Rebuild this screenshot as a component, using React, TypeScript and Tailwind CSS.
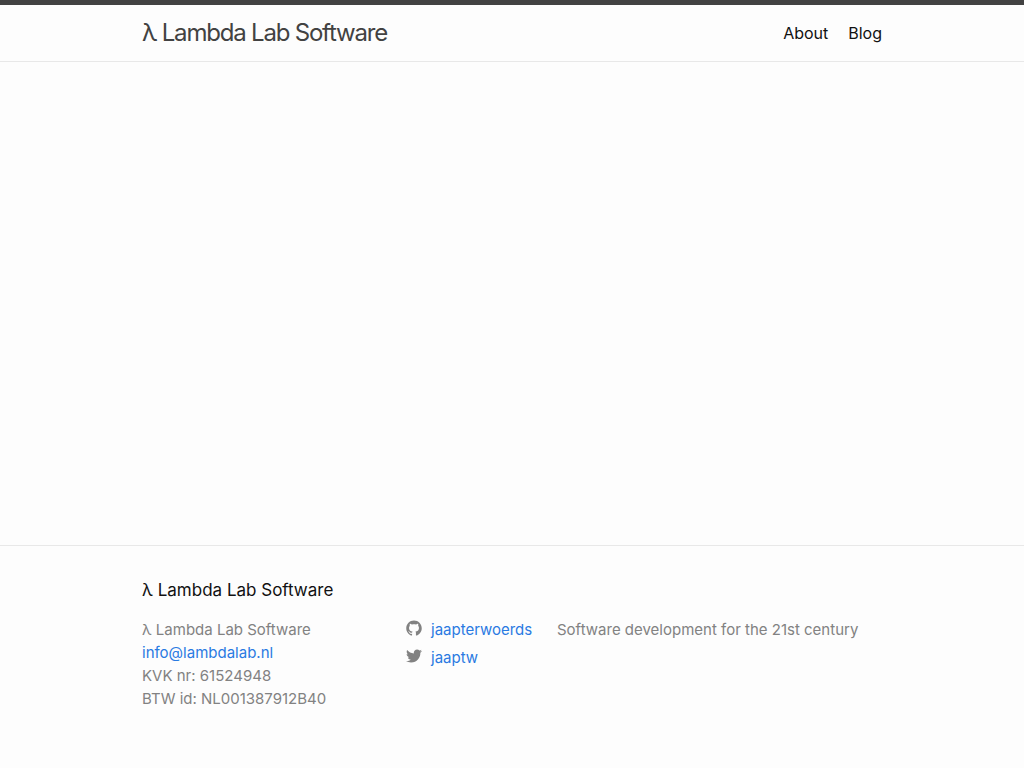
import React from 'react';

const navLinks = [
    { label: 'About', href: '/about/' },
    { label: 'Blog', href: '/blog/' },
];

const GithubIcon: React.FC = () => (
    <svg viewBox="0 0 16 16" className="w-4 h-5 fill-[#828282]" aria-hidden="true">
        <path d="M7.999,0.431c-4.285,0-7.76,3.474-7.76,7.761 c0,3.428,2.223,6.337,5.307,7.363c0.388,0.071,0.53-0.168,0.53-0.374c0-0.184-0.007-0.672-0.01-1.32 c-2.159,0.469-2.614-1.04-2.614-1.04c-0.353-0.896-0.862-1.135-0.862-1.135c-0.705-0.481,0.053-0.472,0.053-0.472 c0.779,0.055,1.189,0.8,1.189,0.8c0.692,1.186,1.816,0.843,2.258,0.645c0.071-0.502,0.271-0.843,0.493-1.037 C4.86,11.425,3.049,10.76,3.049,7.786c0-0.847,0.302-1.54,0.799-2.082C3.768,5.507,3.501,4.718,3.924,3.65 c0,0,0.652-0.209,2.134,0.796C6.677,4.273,7.34,4.187,8,4.184c0.659,0.003,1.323,0.089,1.943,0.261 c1.482-1.004,2.132-0.796,2.132-0.796c0.423,1.068,0.157,1.857,0.077,2.054c0.497,0.542,0.798,1.235,0.798,2.082 c0,2.981-1.814,3.637-3.543,3.829c0.279,0.24,0.527,0.713,0.527,1.437c0,1.037-0.01,1.874-0.01,2.129 c0,0.208,0.14,0.449,0.534,0.373c3.081-1.028,5.302-3.935,5.302-7.362C15.76,3.906,12.285,0.431,7.999,0.431z" />
    </svg>
);

const TwitterIcon: React.FC = () => (
    <svg viewBox="0 0 16 16" className="w-4 h-5 fill-[#828282]" aria-hidden="true">
        <path d="M15.969,3.058c-0.586,0.26-1.217,0.436-1.878,0.515c0.675-0.405,1.194-1.045,1.438-1.809c-0.632,0.375-1.332,0.647-2.076,0.793c-0.596-0.636-1.446-1.033-2.387-1.033c-1.806,0-3.27,1.464-3.27,3.27 c0,0.256,0.029,0.506,0.085,0.745C5.163,5.404,2.753,4.102,1.14,2.124C0.859,2.607,0.698,3.168,0.698,3.767 c0,1.134,0.577,2.135,1.455,2.722C1.616,6.472,1.112,6.325,0.671,6.08c0,0.014,0,0.027,0,0.041c0,1.584,1.127,2.906,2.623,3.206 C3.02,9.402,2.731,9.442,2.433,9.442c-0.211,0-0.416-0.021-0.615-0.059c0.416,1.299,1.624,2.245,3.055,2.271 c-1.119,0.877-2.529,1.4-4.061,1.4c-0.264,0-0.524-0.015-0.78-0.046c1.447,0.928,3.166,1.469,5.013,1.469 c6.015,0,9.304-4.983,9.304-9.304c0-0.142-0.003-0.283-0.009-0.423C14.976,4.29,15.531,3.714,15.969,3.058z" />
    </svg>
);

const socialLinks = [
    { name: 'jaapterwoerds', href: 'https://github.com/jaapterwoerds', Icon: GithubIcon },
    { name: 'jaaptw', href: 'https://twitter.com/jaaptw', Icon: TwitterIcon },
];

const Header: React.FC = () => (
    <header className="border-t-5 border-t-[#424242] border-b border-b-[#e8e8e8]">
        <div className="max-w-[800px] mx-auto px-[30px] flex items-center justify-between">
            <a href="/" className="text-2xl leading-14 tracking-tighter text-[#424242]">λ Lambda Lab Software</a>
            <nav className="flex gap-5 text-base leading-14 text-[#111]">
                {navLinks.map(l => (
                    <a key={l.href} href={l.href}>{l.label}</a>
                ))}
            </nav>
        </div>
    </header>
);

const Footer: React.FC = () => (
    <footer className="border-t border-[#e8e8e8] pt-[30px] pb-[58px]">
        <div className="max-w-[800px] mx-auto px-[30px]">
            <h2 className="text-[17px] leading-7 mb-[14px] text-[#111]">λ Lambda Lab Software</h2>
            <div className="flex text-[15px] leading-[23px] text-[#828282]">
                <ul className="w-[264px]">
                    <li>λ Lambda Lab Software</li>
                    <li><a href="mailto:info@lambdalab.nl" className="text-[#2a7ae2]">info@lambdalab.nl</a></li>
                    <li>KVK nr: 61524948</li>
                    <li>BTW id: NL001387912B40</li>
                </ul>
                <ul className="w-[151px] flex flex-col gap-[5px]">
                    {socialLinks.map(({ name, href, Icon }) => (
                        <li key={name}>
                            <a href={href} className="flex items-start gap-[9px] text-[#2a7ae2]">
                                <Icon />
                                <span>{name}</span>
                            </a>
                        </li>
                    ))}
                </ul>
                <p className="flex-1">Software development for the 21st century</p>
            </div>
        </div>
    </footer>
);

const App: React.FC = () => (
    <div className="min-h-screen flex flex-col bg-[#fdfdfd] font-['Inter','Liberation_Sans',sans-serif]">
        <Header />
        <main className="flex-1" />
        <Footer />
    </div>
);

export default App;
